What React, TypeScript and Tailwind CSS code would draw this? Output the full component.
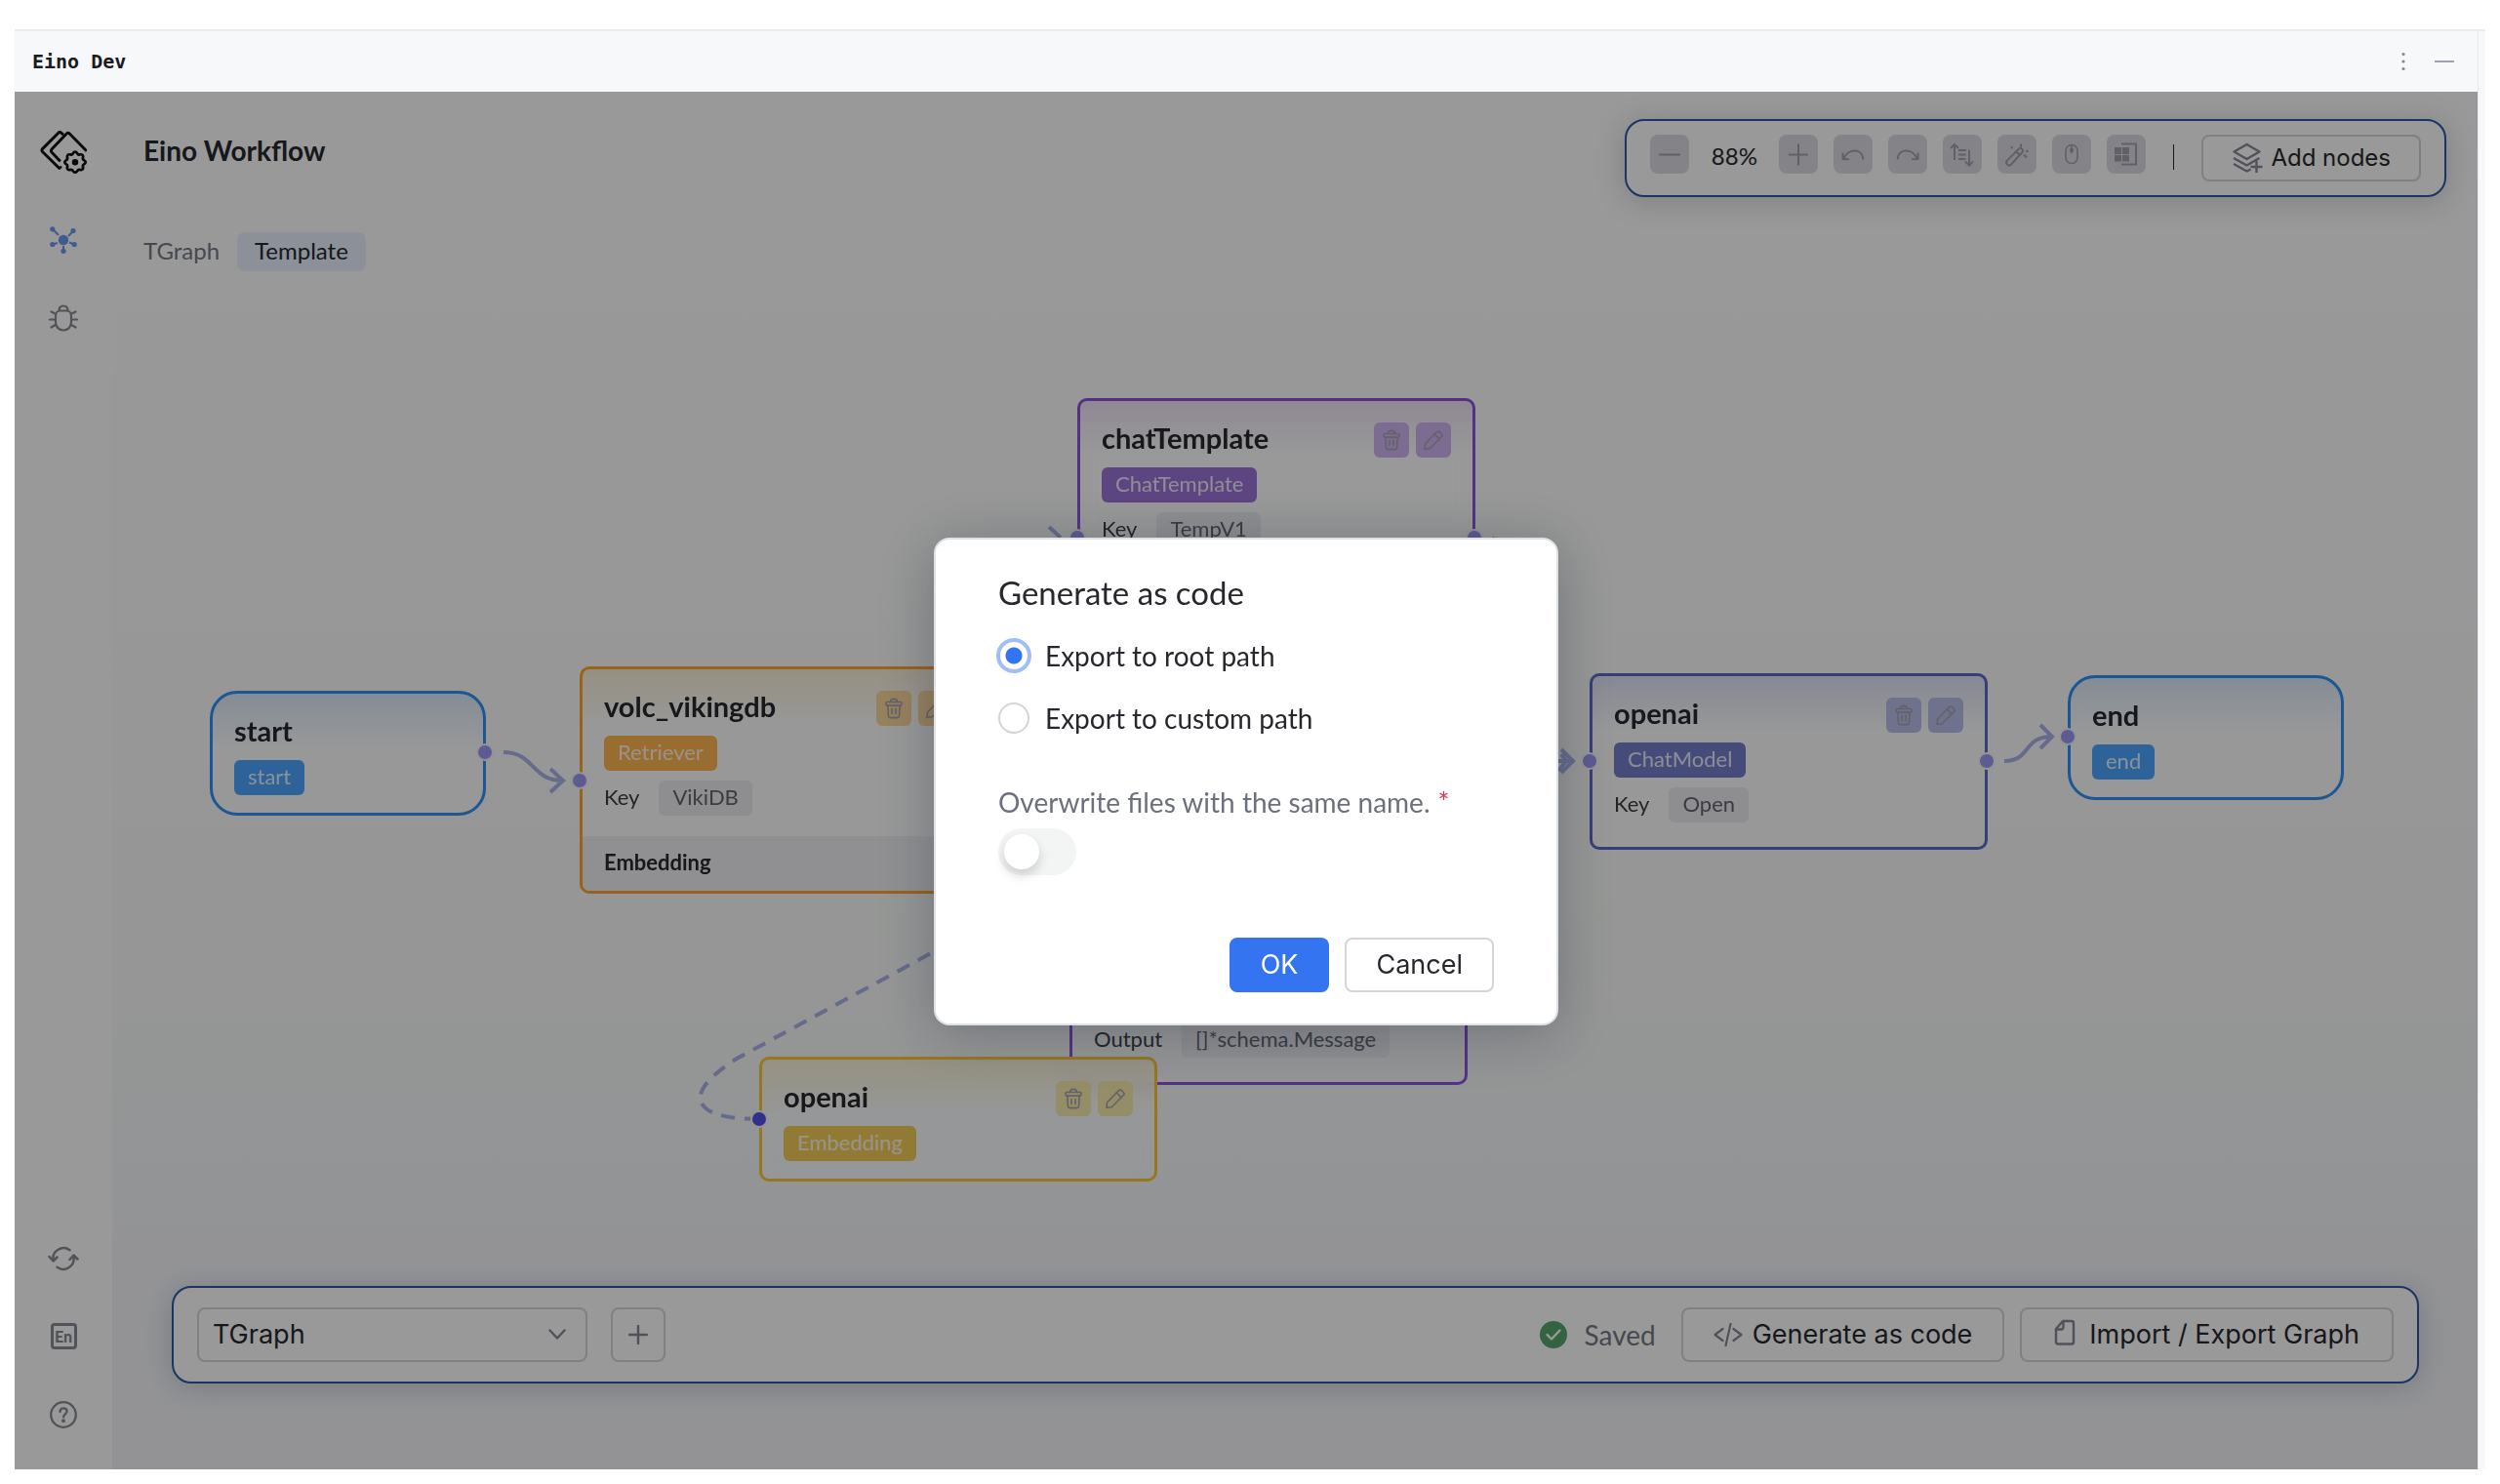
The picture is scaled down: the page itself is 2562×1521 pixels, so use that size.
import React from "react";

type Tone = "blue" | "orange" | "purple" | "indigo" | "yellow";

const FRAME: Record<Tone, string> = {
  blue: "rounded-[28px] border-[#308ff5] from-[#dcebfa]",
  orange: "rounded-[10px] border-[#ffa42e] from-[#fbf0d9]",
  purple: "rounded-[10px] border-[#8c53e1] from-[#efe3f6]",
  indigo: "rounded-[10px] border-[#5b69c8] from-[#e0e3f7]",
  yellow: "rounded-[10px] border-[#f8c63a] from-[#f9f3d9]",
};

const BADGE: Record<Tone, string> = {
  blue: "bg-[#4ea5ff]",
  orange: "bg-[#ffb450]",
  purple: "bg-[#9a74d8]",
  indigo: "bg-[#747fca]",
  yellow: "bg-[#f2cb57]",
};

const ACTION: Record<Tone, string> = {
  blue: "bg-[#b8dcff]",
  orange: "bg-[#fbd89d]",
  purple: "bg-[#d0b4f3]",
  indigo: "bg-[#b7bfec]",
  yellow: "bg-[#f8eaae]",
};

function TrashIcon() {
  return (
    <svg viewBox="0 0 20 22" className="h-[22px] w-5" fill="none" stroke="currentColor" strokeWidth="1.6" strokeLinejoin="round" strokeLinecap="round" aria-hidden="true">
      <rect x="2" y="4.5" width="16" height="3.6" rx="1.2" />
      <path d="M6.5 4.3C6.5 2.4 7.6 1.4 10 1.4s3.5 1 3.5 2.9M3.8 8.2l.6 10.6c.1 1.2.8 1.8 1.9 1.8h7.4c1.1 0 1.800-.6 1.900-1.800l.6-10.600M8 11.500v5M12 11.500v5" />
    </svg>
  );
}

function PencilIcon() {
  return (
    <svg viewBox="0 0 22 22" className="size-[22px]" fill="none" stroke="currentColor" strokeWidth="1.6" strokeLinejoin="round" strokeLinecap="round" aria-hidden="true">
      <path d="M2 20.300l.5-5.300L14.500 2.600c.9-.9 1.900-.9 2.800 0l2.100 2.100c.9.9.9 1.900 0 2.800L7.300 19.800z" />
      <path d="M12.300 5l4.800 4.900" />
    </svg>
  );
}

function Dot({ className }: { className: string }) {
  return <span className={"absolute size-[18px] rounded-full border-2 border-[#f6f6fb] " + className} />;
}

type NodeProps = {
  title: string;
  kind: string;
  tone: Tone;
  place: string;
  pad: string;
  keyName?: string;
  actions?: boolean;
  children?: React.ReactNode;
};

function FlowNode({ title, kind, tone, place, pad, keyName, actions, children }: NodeProps) {
  return (
    <article className={"absolute border-[3px] bg-white/50 bg-linear-to-b to-transparent to-[56px] backdrop-blur-sm " + FRAME[tone] + " " + place}>
      <div className={"flex flex-col items-start gap-[10px] px-[22px] pt-[22px] " + pad}>
        <div className="flex h-9 w-full items-start justify-between">
          <h2 className="text-[29px] leading-8 font-bold">{title}</h2>
          {actions && (
            <div className="flex gap-[7px]">
              <button type="button" aria-label={"Delete " + title} className={"flex size-9 items-center justify-center rounded-md text-[#a5a2b0] " + ACTION[tone]}>
                <TrashIcon />
              </button>
              <button type="button" aria-label={"Edit " + title} className={"flex size-9 items-center justify-center rounded-md text-[#a5a2b0] " + ACTION[tone]}>
                <PencilIcon />
              </button>
            </div>
          )}
        </div>
        <span className={"h-9 rounded-md px-[14px] text-[22px] leading-[34px] text-white/85 " + BADGE[tone]}>{kind}</span>
        {keyName && <Field label="Key" value={keyName} />}
      </div>
      {children}
    </article>
  );
}

function Field({ label, value }: { label: string; value: string }) {
  return (
    <div className="flex h-9 gap-5 text-[22px] leading-[34px]">
      <span className="text-[#3c3d44]">{label}</span>
      <span className="rounded-md bg-[#ededf1] px-[14px] text-[#63656e]">{value}</span>
    </div>
  );
}

function Edges() {
  return (
    <svg className="absolute inset-0 h-full w-full" fill="none" stroke="#aab3e8" strokeWidth="4" aria-hidden="true">
      <path d="M401 677c32 0 28 29 61 29M449 694l13 12-13 12" />
      <path d="M960 446l12 11M1414 458c8 0 14 4 20 12" />
      <path d="M1470 686h27M1485 674l12 12-12 12M1485 679l5 7-8 10" />
      <path d="M1939 686c28 0 18-25 49-25M1976 649l12 12-12 12" />
      <path d="M662 1053c-66 0-82-24-22-62L852 876" strokeDasharray="14 10" />
    </svg>
  );
}

function LogoIcon() {
  return (
    <svg viewBox="0 0 48 44" className="h-11 w-12" fill="none" stroke="#101012" strokeWidth="2.900" strokeLinecap="round" strokeLinejoin="round" aria-hidden="true">
      <path d="M21 37.500l-1.200 1L2.500 21.500c-.9-.9-.9-2 0-2.900L18.800 2.200c.9-.9 1.900-.9 2.900 0l1.400 1.200" />
      <path d="M20 30.500L12.200 22.300c-1.200-1.300-1.200-2.300 0-3.600L27 3.200c1.200-1.200 2.300-1.200 3.500 0L47 20" />
      <path d="M33.600 23.500c1.300-2.400 3.500-2.400 4.800 0 .5 1 1.600 1.500 2.600 1.200 2.600-.7 4.100.9 3.400 3.500-.3 1.100.1 2.100 1.100 2.600 2.300 1.300 2.300 3.200 0 4.500-1 .6-1.400 1.600-1.100 2.600.7 2.600-.8 4-3.400 3.300-1-.3-2.100.2-2.600 1.200-1.300 2.300-3.500 2.300-4.800 0-.5-1-1.600-1.500-2.600-1.200-2.600.7-4.100-.7-3.400-3.300.3-1-.1-2-1.100-2.600-2.300-1.300-2.300-3.200 0-4.500 1-.5 1.400-1.500 1.100-2.600-.7-2.600.8-4.200 3.400-3.500 1 .3 2.100-.2 2.600-1.200z" transform="translate(1.800 1.200) scale(.95 .94)" />
      <circle cx="36" cy="32.200" r="1.800" fill="#101012" />
    </svg>
  );
}

function NetworkIcon() {
  return (
    <svg viewBox="0 0 28 28" className="size-7" fill="#6c98f0" stroke="#6c98f0" strokeWidth="2" aria-hidden="true">
      <path d="M3 3l6 6M24 5l-5 5M3 18.500l5-1.500M25 18.500l-5-2M14 25v-5" />
      <g stroke="none">
        <circle cx="14" cy="14" r="5.200" />
        <circle cx="2.800" cy="2.800" r="2.600" />
        <circle cx="24" cy="4.500" r="2.600" />
        <circle cx="2.800" cy="18.500" r="2.600" />
        <circle cx="25.200" cy="18.500" r="2.600" />
        <circle cx="14" cy="25.300" r="2.600" />
      </g>
    </svg>
  );
}

function BugIcon() {
  return (
    <svg viewBox="0 0 30 28" className="h-7 w-[30px]" fill="none" stroke="currentColor" strokeWidth="2.200" strokeLinecap="round" aria-hidden="true">
      <path d="M7 12c0-3.500 2.200-5.500 4.500-5.500h7c2.300 0 4.500 2 4.500 5.500v6c0 5-3.500 8.500-8 8.500S7 23 7 18zM10.500 6.500C10.500 3.500 12.200 1.500 15 1.500s4.500 2 4.500 5M1 15.500h6M23 15.500h6M2.500 7.500L7.500 10M27.500 7.500l-5 2.500M2.500 23.500l5-3M27.500 23.500l-5-3" />
    </svg>
  );
}

function RefreshIcon() {
  return (
    <svg viewBox="0 0 32 26" className="h-[26px] w-8" fill="none" stroke="currentColor" strokeWidth="2.500" strokeLinecap="round" strokeLinejoin="round" aria-hidden="true">
      <path d="M22.500 4.200A10.800 10.800 0 0 0 5.500 14.500M1.500 11l4 4.500 4-4M9.500 21.800a10.800 10.800 0 0 0 17-10.300M22.500 14l4-4.500 4 4" />
    </svg>
  );
}

function HelpIcon() {
  return (
    <svg viewBox="0 0 28 28" className="size-7" fill="none" stroke="currentColor" strokeWidth="2.300" strokeLinecap="round" aria-hidden="true">
      <circle cx="14" cy="14" r="12.800" />
      <path d="M10.500 11c0-2.200 1.500-3.600 3.600-3.600 2 0 3.500 1.300 3.500 3.200 0 2.700-3.500 3-3.500 5.800" />
      <circle cx="14" cy="20.300" r=".8" fill="currentColor" />
    </svg>
  );
}

const TOOL_ICONS: { label: string; art: React.ReactNode }[] = [
  { label: "Zoom in", art: <path d="M4 14.500h20M14 3.500v22" strokeWidth="2" /> },
  { label: "Undo", art: <path d="M24.500 19.500C24 8 9 7.500 4.500 18.500M3.500 12.500v6.500l6.500.200" /> },
  { label: "Redo", art: <path d="M3.500 19.500C4 8 19 7.500 23.500 18.500M24.500 12.500v6.500l-6.500.200" /> },
  { label: "Sort", art: <path d="M6 20V4M2 8l4-4 4 4M21 9.500V25M17 21.500l4 4 4-4M10 10h8M10 14.500h7.500M10 19h7.500" /> },
  { label: "Auto layout", art: <path d="M4 24.500c-1.500-1.500-1.500-2.500 0-4L16 8.500c2-2 5.500 1.500 3.500 3.500L8 24.500c-1.500 1.500-2.500 1.500-4 0zM13.500 11.500l3.500 3.500M18 6.500V3.500M9.500 8L8 6.500M21 14.500l3 3M23 11h2.500" /> },
  { label: "Mouse mode", art: <><rect x="8" y="4.500" width="12" height="19" rx="6" strokeWidth="1.600" /><path d="M14 5v4.500M14 9v4" strokeWidth="1.600" /><circle cx="14" cy="10" r="1.200" fill="currentColor" /></> },
  { label: "Minimap", art: <><path d="M9 3.500h15v21H9" /><path d="M2 7h7v7H2zM10 7h7v7h-7zM2 15h7v6.500H2zM10 15h7v6.500h-7z" fill="currentColor" stroke="none" /></> },
];

function ToolButton({ label, children }: { label: string; children: React.ReactNode }) {
  return (
    <button type="button" aria-label={label} className="flex size-10 items-center justify-center rounded-lg bg-[#dcdde3] text-[#9fa1ad]">
      <svg viewBox="0 0 28 28" className="size-7" fill="none" stroke="currentColor" strokeWidth="2" aria-hidden="true">
        {children}
      </svg>
    </button>
  );
}

const PANEL = "rounded-[20px] border-2 border-[#2b57a8] bg-white shadow-[0_4px_30px_rgba(40,50,80,0.22)]";
const OUTLINE = "flex items-center justify-center rounded-lg border-2 border-[#d3d5dd] font-[Inter,sans-serif] text-[#27282e]";

function Toolbar() {
  return (
    <div className={"flex h-20 items-start gap-4 px-6 py-[14px] " + PANEL}>
      <ToolButton label="Zoom out"><path d="M3 14.500h22" strokeWidth="2" /></ToolButton>
      <span className="w-[60px] pt-[6px] text-center text-2xl">88%</span>
      {TOOL_ICONS.map((t) => (
        <ToolButton key={t.label} label={t.label}>{t.art}</ToolButton>
      ))}
      <span className="mx-3 mt-[10px] h-[26px] w-px bg-[#27282e]" />
      <button type="button" className={OUTLINE + " h-12 gap-2 px-[29px] text-2xl"}>
        <svg viewBox="0 0 32 32" className="size-8 text-[#858894]" fill="none" stroke="currentColor" strokeWidth="2.400" strokeLinejoin="round" aria-hidden="true">
          <path d="M15.500 2l13 7.500-13 7.500-13-7.500zM2 16l13.500 7.500L28.500 16M2 22l13.500 7.500 4-2M25.500 19v12M19.500 25h12" />
        </svg>
        Add nodes
      </button>
    </div>
  );
}

function BottomBar() {
  return (
    <div className={"relative mr-[60px] mb-[88px] ml-[61px] flex h-[100px] items-center px-6 " + PANEL}>
      <div className="relative w-[400px]">
        <select aria-label="Graph" defaultValue="TGraph" className="h-14 w-full appearance-none rounded-lg border-2 border-[#d3d5dd] bg-transparent pl-[14px] font-[Inter,sans-serif] text-[27px] text-[#27282e]">
          <option>TGraph</option>
        </select>
        <svg viewBox="0 0 18 12" className="pointer-events-none absolute top-[22px] right-[22px] h-3 w-[18px]" fill="none" stroke="#858894" strokeWidth="2.400" strokeLinecap="round" strokeLinejoin="round" aria-hidden="true">
          <path d="M1.500 1.500L9 9.500l7.500-8" />
        </svg>
      </div>
      <button type="button" aria-label="Add graph" className={OUTLINE + " ml-6 size-14"}>
        <svg viewBox="0 0 20 20" className="size-5" stroke="#858894" strokeWidth="2.400" strokeLinecap="round" aria-hidden="true">
          <path d="M1 10h18M10 1v18" />
        </svg>
      </button>
      <div className="mr-[26px] ml-auto flex items-center gap-[18px] text-[28px] text-[#767985]">
        <svg viewBox="0 0 28 28" className="size-7" aria-hidden="true">
          <circle cx="14" cy="14" r="14" fill="#55a76a" />
          <path d="M7.500 14l4.500 4.500L20.500 9.500" fill="none" stroke="#fff" strokeWidth="2.400" strokeLinecap="round" strokeLinejoin="round" />
        </svg>
        Saved
      </div>
      <button type="button" className={OUTLINE + " h-14 gap-[10px] px-[31px] text-[27px]"}>
        <svg viewBox="0 0 30 24" className="h-6 w-[30px]" fill="none" stroke="#858894" strokeWidth="2.200" strokeLinecap="round" strokeLinejoin="round" aria-hidden="true">
          <path d="M9.500 6L1.500 12l8 6M20.500 6l8 6-8 6M17.500 1l-5 22" />
        </svg>
        Generate as code
      </button>
      <button type="button" className={OUTLINE + " ml-4 h-14 gap-[14px] px-[33px] text-[27px]"}>
        <svg viewBox="0 0 22 28" className="mb-1 h-7 w-[22px]" fill="none" stroke="#858894" strokeWidth="2.400" strokeLinejoin="round" aria-hidden="true">
          <path d="M9 2h9c1.400 0 2 .8 2 2v19.500c0 1.300-.7 2-2 2H4c-1.300 0-2-.7-2-2V10zM9.500 2v6c0 1.500-.8 2.500-2.200 2.500H2" />
        </svg>
        Import / Export Graph
      </button>
    </div>
  );
}

const RADIO = "size-8 appearance-none rounded-full border-2 border-[#d3d5db] bg-white checked:-m-[2px] checked:size-9 checked:border-[4px] checked:border-[#a0bdf8] checked:bg-[radial-gradient(circle,#3574f0_8px,white_9px)]";

function ExportDialog() {
  return (
    <div className="absolute inset-0 flex items-center justify-center bg-black/40 pt-[2px]">
      <div role="dialog" aria-modal="true" aria-labelledby="dialog-title" className="flex w-[640px] flex-col rounded-2xl border-2 border-[#dfe1e5] bg-white px-16 pt-[34px] pb-8 text-[28px] leading-10 text-[#27282e] shadow-[0_8px_60px_rgba(20,30,50,0.3)]">
        <h1 id="dialog-title" className="text-[33px]">Generate as code</h1>
        <label className="mt-[25px] flex h-10 items-center gap-4">
          <input type="radio" name="target" defaultChecked className={RADIO} />
          Export to root path
        </label>
        <label className="mt-6 flex h-10 items-center gap-4">
          <input type="radio" name="target" className={RADIO} />
          Export to custom path
        </label>
        <label htmlFor="overwrite" className="mt-[46px] text-[#6c707e]">
          Overwrite files with the same name.<span className="ml-2 text-[#e0364f]">*</span>
        </label>
        <input
          id="overwrite"
          type="checkbox"
          role="switch"
          className="mt-[7px] h-12 w-20 appearance-none rounded-full bg-[#f3f5f4] p-[6px] before:block before:size-9 before:rounded-full before:bg-white before:shadow-[0_6px_12px_rgba(0,0,0,0.16)]"
        />
        <div className="mt-16 flex justify-end gap-4 font-[Inter,sans-serif] text-[27px]">
          <button type="button" className="h-14 rounded-lg bg-[#3574f0] px-8 text-white">OK</button>
          <button type="button" className="h-14 rounded-lg border-2 border-[#d3d5db] px-[30px]">Cancel</button>
        </div>
      </div>
    </div>
  );
}

export default function App() {
  return (
    <div className="flex min-h-screen bg-white px-[15px] pt-[30px] pb-[15px] font-[Lato,sans-serif] text-[#27282e]">
      <div className="flex flex-1 border-t-2 border-[#ebecf0]">
        <div className="flex flex-1 flex-col">
          <header className="flex h-[62px] items-center bg-[#f7f8fa] pr-6 pl-[18px]">
            <span className="flex-1 font-['DejaVu_Sans_Mono',monospace] text-xl font-bold text-[#1a1b1f]">Eino Dev</span>
            <button type="button" aria-label="More options" className="mr-[30px]">
              <svg viewBox="0 0 4 20" className="h-5 w-1" fill="#818594" aria-hidden="true">
                <circle cx="2" cy="2.500" r="1.600" />
                <circle cx="2" cy="10" r="1.600" />
                <circle cx="2" cy="17.500" r="1.600" />
              </svg>
            </button>
            <button type="button" aria-label="Minimize" className="h-[2px] w-5 bg-[#9fa2ae]" />
          </header>

          <div className="relative flex flex-1">
            <aside className="flex w-[100px] flex-col items-center pt-10 pb-[42px] text-[#868a92]">
              <LogoIcon />
              <nav aria-label="Main" className="mt-[54px] flex flex-col items-center gap-[52px]">
                <a href="#workflow" aria-label="Workflow"><NetworkIcon /></a>
                <a href="#debug" aria-label="Debug"><BugIcon /></a>
              </nav>
              <div className="mt-auto flex flex-col items-center gap-[53px]">
                <button type="button" aria-label="Refresh"><RefreshIcon /></button>
                <button type="button" aria-label="Language" className="flex size-[27px] items-center justify-center rounded-sm border-[3px] border-[#868a92] text-base leading-none font-black">En</button>
                <button type="button" aria-label="Help"><HelpIcon /></button>
              </div>
            </aside>

            <main className="relative flex flex-1 flex-col bg-linear-to-b from-white from-10% via-[#f9fbf9] via-60% to-[#f5f6fa] to-85%">
              <div className="absolute inset-0">
                <Edges />
                <FlowNode title="start" kind="start" tone="blue" place="left-[100px] top-[614px] w-[283px]" pad="pb-[18px]">
                  <Dot className="top-[51px] -right-[11px] bg-[#9a98f4]" />
                </FlowNode>
                <FlowNode title="volc_vikingdb" kind="Retriever" tone="orange" keyName="VikiDB" actions place="left-[479px] top-[589px] w-[408px]" pad="pb-[21px]">
                  <h3 className="h-14 rounded-b-lg bg-[#f0f0f3] px-[22px] text-[22px] leading-[54px] font-bold">Embedding</h3>
                  <Dot className="top-[105px] -left-[12px] bg-[#9a98f4]" />
                </FlowNode>
                <FlowNode title="chatTemplate" kind="ChatTemplate" tone="purple" keyName="TempV1" actions place="left-[989px] top-[314px] w-[408px]" pad="pb-20">
                  <Dot className="top-[131px] -left-[12px] bg-[#9a98f4]" />
                  <Dot className="top-[131px] -right-[11px] bg-[#9a98f4]" />
                </FlowNode>
                <article className="absolute top-[830px] left-[981px] flex h-[188px] w-[408px] flex-col justify-end rounded-[10px] border-[3px] border-[#8c53e1] px-[22px] pb-[25px]">
                  <Field label="Output" value="[]*schema.Message" />
                </article>
                <FlowNode title="openai" kind="Embedding" tone="yellow" actions place="left-[663px] top-[989px] w-[408px]" pad="pb-[18px]">
                  <Dot className="top-[52px] -left-[12px] bg-[#5250ea]" />
                </FlowNode>
                <FlowNode title="openai" kind="ChatModel" tone="indigo" keyName="Open" actions place="left-[1514px] top-[596px] w-[408px]" pad="pb-[25px]">
                  <Dot className="top-[78px] -left-[12px] bg-[#9a98f4]" />
                  <Dot className="top-[78px] -right-[11px] bg-[#9a98f4]" />
                </FlowNode>
                <FlowNode title="end" kind="end" tone="blue" place="left-[2004px] top-[598px] w-[283px]" pad="pb-[18px]">
                  <Dot className="top-[51px] -left-[12px] bg-[#9a98f4]" />
                </FlowNode>
              </div>

              <div className="relative flex items-start justify-between px-8 pt-7">
                <h1 className="mt-3 text-[28px] leading-10 font-bold">Eino Workflow</h1>
                <Toolbar />
              </div>
              <nav aria-label="Breadcrumb" className="relative mt-9 flex gap-[18px] pl-8 text-2xl leading-[38px]">
                <a href="#tgraph" className="text-[#767985]">TGraph</a>
                <a href="#template" className="h-10 rounded-lg bg-[#e9f1fd] px-[18px]">Template</a>
              </nav>
              <div className="flex-1" />
              <BottomBar />
            </main>
            <ExportDialog />
          </div>
        </div>
        <div className="w-2 border-l border-[#e6e7ec] bg-[#f7f8fa]" />
      </div>
    </div>
  );
}
